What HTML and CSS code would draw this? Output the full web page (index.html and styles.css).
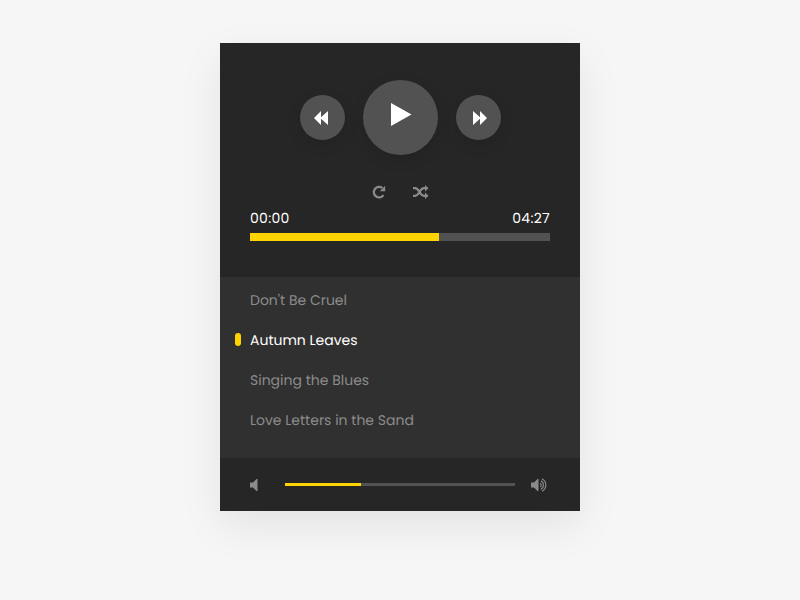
FILE: index.html
```html
<!DOCTYPE html>
<html lang="en">
<head>
<meta charset="utf-8">
<title>Music player</title>
<link rel="stylesheet" href="styles.css">
</head>
<body>
<main class="player">
  <section class="top">
    <div class="controls">
      <button class="btn" aria-label="Previous"><svg width="45" height="45" viewBox="0 0 45 45"><path d="M21 16v6.300L28 16v14l-7-6.300V30l-7-7z"/></svg></button>
      <button class="btn play" aria-label="Play"><svg width="75" height="75" viewBox="0 0 75 75"><path d="M28 23l20.500 11.500L28 46z"/></svg></button>
      <button class="btn" aria-label="Next"><svg width="45" height="45" viewBox="0 0 45 45"><path d="M17 16l7 6.300V16l7 7-7 7v-6.300L17 30z"/></svg></button>
    </div>
    <div class="modes">
      <svg class="line-icon" width="14" height="14" viewBox="0 0 14 14"><path d="M11.500 10.200A5.300 5.300 0 1 1 10.400 3"/><path class="solid" d="M13.200.8v5.500H7.800z"/></svg>
      <svg class="line-icon" width="16" height="14" viewBox="0 0 16 14"><path d="M0 3.200h2c4.500 0 4.500 7.600 9 7.600h2M0 10.800h2c4.500 0 4.500-7.600 9-7.600h2"/><path class="solid" d="M12 0l3.500 3.200L12 6.400zM12 7.600l3.500 3.200L12 14z"/></svg>
    </div>
    <div class="times"><span>00:00</span><span>04:27</span></div>
    <div class="track"><div class="fill"></div></div>
  </section>
  <ul class="songs">
    <li>Don't Be Cruel</li>
    <li class="active">Autumn Leaves</li>
    <li>Singing the Blues</li>
    <li>Love Letters in the Sand</li>
  </ul>
  <section class="volume">
    <svg width="8" height="14" viewBox="0 0 8 14"><path d="M0 4.500h3L6.500 1H7.500v12H6.500L3 9.500H0z"/></svg>
    <div class="vol-track"><div class="vol-fill"></div></div>
    <svg width="17" height="14" viewBox="0 0 17 14"><path d="M0 4.500h3L6.500 1H7.500v12H6.500L3 9.500H0z"/><path class="wave" d="M9.300 5.200a2.200 2.200 0 0 1 0 3.600M10 2.900a4.600 4.600 0 0 1 0 8.200M10.900.8a6.900 6.900 0 0 1 0 12.400"/></svg>
  </section>
</main>
</body>
</html>
```
FILE: styles.css
```css
* { box-sizing: border-box; }
body {
  margin: 0;
  height: 600px;
  padding-top: 43px;
  background: #f6f6f6;
  font: 14px/20px Poppins, Inter, sans-serif;
  text-rendering: geometricPrecision;
  overflow: hidden;
}
.player {
  width: 360px;
  height: 468px;
  margin: 0 auto;
  background: #262626;
  box-shadow: 0 15px 40px rgba(0, 0, 0, .08);
}
svg { display: block; flex: none; }
.top { height: 234px; padding: 37px 30px 0; }
.controls {
  display: flex;
  justify-content: center;
  align-items: center;
  gap: 18px;
  height: 75px;
}
.btn {
  width: 45px;
  height: 45px;
  padding: 0;
  border: 0;
  border-radius: 50%;
  background: #525252;
  box-shadow: 0 5px 15px rgba(0, 0, 0, .1);
}
.btn path { fill: #fff; }
.play { width: 75px; height: 75px; }
.modes {
  display: flex;
  justify-content: center;
  gap: 27px;
  height: 14px;
  margin-top: 30px;
  padding-left: 1px;
}
.line-icon path { fill: none; stroke: #8b8b8b; stroke-width: 2.2; }
.line-icon .solid { fill: #8b8b8b; stroke: none; }
.times {
  display: flex;
  justify-content: space-between;
  height: 20px;
  margin-top: 9px;
  color: #fff;
  letter-spacing: .3px;
}
.track { height: 8px; margin-top: 5px; background: #525252; }
.fill { width: 189px; height: 8px; background: #fdd400; }
.songs {
  height: 181px;
  margin: 0;
  padding: 3px 30px 0;
  background: #303030;
  list-style: none;
}
.songs li { height: 40px; line-height: 40px; color: #8b8b8b; white-space: nowrap; }
.songs .active { display: flex; align-items: center; color: #fff; }
.active::before {
  content: "";
  width: 6px;
  height: 13px;
  margin: -1px 9px 0 -15px;
  border-radius: 3px;
  background: #fdd400;
}
.volume {
  display: flex;
  align-items: center;
  height: 53px;
  padding: 0 32px 0 30px;
}
.volume svg { margin-top: 1px; }
.volume path { fill: #8b8b8b; }
.volume .wave { fill: none; stroke: #8b8b8b; stroke-width: 1.2; }
.vol-track { width: 230px; height: 3px; margin: 0 16px 0 27px; background: #525252; }
.vol-fill { width: 76px; height: 3px; background: #fdd400; }
```
